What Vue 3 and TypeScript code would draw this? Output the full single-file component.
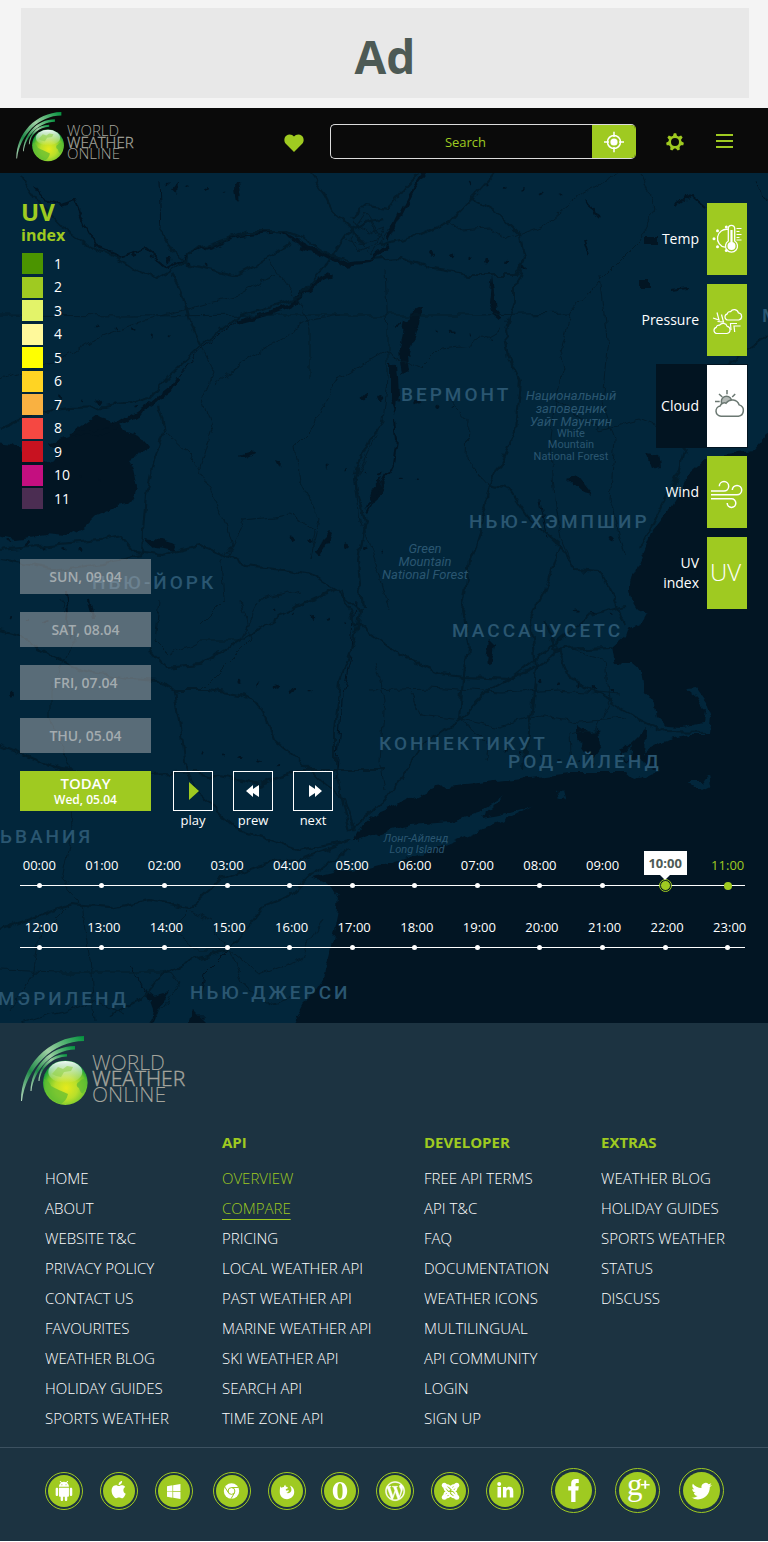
<script setup lang="ts">
import { ref } from 'vue'

interface LegendEntry { value: number; color: string }
interface MapLabel { text: string; x: number; y: number; kind: 'state' | 'park' | 'small' | 'island' }
interface Road { d: string; w: number }
interface Column { title: string; links: string[] }

const legend: LegendEntry[] = [
  { value: 1, color: '#4b9400' },
  { value: 2, color: '#9fca21' },
  { value: 3, color: '#e3f369' },
  { value: 4, color: '#fff99b' },
  { value: 5, color: '#ffff00' },
  { value: 6, color: '#ffd423' },
  { value: 7, color: '#f9b141' },
  { value: 8, color: '#f54842' },
  { value: 9, color: '#c81220' },
  { value: 10, color: '#c40f80' },
  { value: 11, color: '#4b2d52' },
]

const layers = ['Temp', 'Pressure', 'Cloud', 'Wind', 'UV index']
const activeLayer = ref('Cloud')

const days = ['SUN, 09.04', 'SAT, 08.04', 'FRI, 07.04', 'THU, 05.04']

const hour = (n: number): string => `${String(n).padStart(2, '0')}:00`
const timelines = [
  Array.from({ length: 12 }, (_, i) => hour(i)),
  Array.from({ length: 12 }, (_, i) => hour(i + 12)),
]
const selectedHour = ref('10:00')
const nextHour = '11:00'

const columns: Column[] = [
  { title: '', links: ['HOME', 'ABOUT', 'WEBSITE T&C', 'PRIVACY POLICY', 'CONTACT US', 'FAVOURITES', 'WEATHER BLOG', 'HOLIDAY GUIDES', 'SPORTS WEATHER'] },
  { title: 'API', links: ['OVERVIEW', 'COMPARE', 'PRICING', 'LOCAL WEATHER API', 'PAST WEATHER API', 'MARINE WEATHER API', 'SKI WEATHER API', 'SEARCH API', 'TIME ZONE API'] },
  { title: 'DEVELOPER', links: ['FREE API TERMS', 'API T&C', 'FAQ', 'DOCUMENTATION', 'WEATHER ICONS', 'MULTILINGUAL', 'API COMMUNITY', 'LOGIN', 'SIGN UP'] },
  { title: 'EXTRAS', links: ['WEATHER BLOG', 'HOLIDAY GUIDES', 'SPORTS WEATHER', 'STATUS', 'DISCUSS'] },
]

const labels: MapLabel[] = [
  { text: 'ВЕРМОНТ', x: 401, y: 401, kind: 'state' },
  { text: 'НЬЮ-ХЭМПШИР', x: 469, y: 528, kind: 'state' },
  { text: 'МАССАЧУСЕТС', x: 452, y: 637, kind: 'state' },
  { text: 'КОННЕКТИКУТ', x: 379, y: 750, kind: 'state' },
  { text: 'РОД-АЙЛЕНД', x: 508, y: 768, kind: 'state' },
  { text: 'НЬЮ-ЙОРК', x: 92, y: 589, kind: 'state' },
  { text: 'ЬВАНИЯ', x: 0, y: 843, kind: 'state' },
  { text: 'МЭРИЛЕНД', x: -2, y: 1005, kind: 'state' },
  { text: 'НЬЮ-ДЖЕРСИ', x: 190, y: 999, kind: 'state' },
  { text: 'МЭН', x: 762, y: 322, kind: 'state' },
  { text: 'Национальный', x: 571, y: 400, kind: 'park' },
  { text: 'заповедник', x: 571, y: 413, kind: 'park' },
  { text: 'Уайт Маунтин', x: 571, y: 426, kind: 'park' },
  { text: 'White', x: 571, y: 437, kind: 'small' },
  { text: 'Mountain', x: 571, y: 448, kind: 'small' },
  { text: 'National Forest', x: 571, y: 460, kind: 'small' },
  { text: 'Green', x: 425, y: 553, kind: 'park' },
  { text: 'Mountain', x: 425, y: 566, kind: 'park' },
  { text: 'National Forest', x: 425, y: 579, kind: 'park' },
  { text: 'Лонг-Айленд', x: 416, y: 842, kind: 'island' },
  { text: 'Long Island', x: 417, y: 853, kind: 'island' },
]

const roads: Road[] = [
  { w: 2, d: '0,429 40,412 70,408 105,407 130,403 150,398 170,375 200,347 240,315 270,307 300,297 325,267 345,235 365,222 384,218' },
  { w: 2, d: '20,177 35,200 60,225 90,247 120,258 140,272 155,279 175,267 200,248 250,232 285,232 305,240 330,255 350,262' },
  { w: 2, d: '160,230 172,252 190,265 235,275 260,262 290,242' },
  { w: 2, d: '172,272 184,300 190,325 200,345' },
  { w: 1, d: '200,345 214,372 203,400 212,430 200,470' },
  { w: 2, d: '158,405 164,430 155,455 146,495 143,530 142,555 120,560 60,570 0,560' },
  { w: 1, d: '164,430 190,455 215,500 225,520 232,545 228,555' },
  { w: 2, d: '310,173 325,195 335,215 350,228 365,245' },
  { w: 2, d: '0,550 50,545 100,540 120,535 135,552 160,555 200,545 225,555 245,566 285,570 310,575 335,590' },
  { w: 2, d: '384,420 370,440 358,465 355,480 365,520 358,560 362,610' },
  { w: 1, d: '384,352 420,368 440,348 470,345 500,328' },
  { w: 1, d: '340,315 310,320 262,350 230,372 214,385' },
  { w: 1, d: '0,380 60,360 90,340 130,325 190,308 240,295 275,275' },
  { w: 1, d: '384,352 340,378 310,430 295,445 300,480 320,520 310,560' },
  { w: 1, d: '270,260 290,290 300,305 310,330 310,380' },
  { w: 1, d: '232,545 245,520 290,515 315,530 310,560' },
  { w: 1, d: '232,545 222,560 225,600 200,625' },
  { w: 1, d: '0,315 130,316 280,315 480,315 570,313 600,280 640,240 655,210 640,173' },
  { w: 1, d: '570,313 560,350 565,370 555,400 550,440 555,500 562,540 575,570' },
  { w: 1, d: '600,275 608,340 602,400 615,440 610,500 625,555' },
  { w: 2, d: '350,220 368,205 390,208 405,188 420,173' },
  { w: 1, d: '345,240 360,245 380,238 370,220 350,230 372,255 390,230' },
  { w: 1, d: '352,222 368,232 384,226 376,246 358,252 348,238 366,212 384,240' },
  { w: 2, d: '380,245 420,235 450,222 480,190 495,173' },
  { w: 2, d: '470,198 500,215 520,235 525,258 515,275 470,275 430,268 400,258 370,260' },
  { w: 1, d: '450,222 460,230 490,228 506,240 545,225 580,195 620,173' },
  { w: 2, d: '525,258 515,285 515,300 505,330 510,360 520,380 515,430 490,485 480,530 470,560 462,610 468,650 463,680' },
  { w: 2, d: '490,485 510,490 530,520 560,545 575,570 600,572 615,600 625,625' },
  { w: 1, d: '385,270 388,330 388,380 383,420 355,480 360,520 375,560 390,610' },
  { w: 1, d: '450,400 468,420 467,460 490,485' },
  { w: 2, d: '768,335 740,355 710,380 690,430 680,470 660,510 640,550' },
  { w: 1, d: '555,400 600,430 640,420 690,440' },
  { w: 2, d: '560,545 545,590 530,620 535,668 530,720 525,770' },
  { w: 2, d: '340,590 355,622 370,633 400,655 440,673 463,676 510,678 535,668 560,650 612,648' },
  { w: 2, d: '463,676 460,720 420,745 410,765 385,800 350,830' },
  { w: 1, d: '410,690 420,715 460,720 490,745 487,760' },
  { w: 2, d: '545,620 570,680 610,700 640,720 665,732 705,733' },
  { w: 1, d: '460,720 500,728 540,715 580,722 625,718' },
  { w: 2, d: '460,720 490,690 515,675 560,640 590,615 625,605' },
  { w: 1, d: '570,650 605,660 610,700 595,730 570,735 572,765' },
  { w: 1, d: '370,690 430,688 500,693 560,690 620,695' },
  { w: 1, d: '375,660 385,700 380,760 385,790' },
  { w: 2, d: '0,630 20,635 50,655 80,670 130,678 160,680 175,690 180,720 185,760 195,790 240,830 300,850 350,840' },
  { w: 2, d: '175,690 210,690 240,695 265,710 275,740 300,760 320,780 345,800 355,830' },
  { w: 2, d: '150,650 165,668 200,665 240,640 290,610 335,590 360,612 355,640 340,680 335,730 335,770 350,830' },
  { w: 1, d: '240,600 250,640 230,660 200,690' },
  { w: 1, d: '160,600 155,640 170,655 200,640 240,640 260,600 300,590' },
  { w: 2, d: '0,745 60,770 120,775 200,772 260,785 300,770 384,770' },
  { w: 1, d: '60,600 75,640 50,690 50,720 70,770 72,830' },
  { w: 2, d: '0,930 70,905 110,908 150,900 190,908 220,880 270,862 300,860 350,840' },
  { w: 2, d: '230,950 250,925 265,905 290,895 310,875 350,850' },
  { w: 1, d: '72,830 62,880 80,900 90,960 95,1020' },
  { w: 2, d: '230,950 190,960 160,975 140,1000 110,1015' },
  { w: 1, d: '230,950 210,920 190,910 170,930 200,950 230,950 260,975 300,960 320,920' },
  { w: 1, d: '230,950 245,985 270,1005 300,995' },
  { w: 1, d: '0,970 60,972 170,972 180,985 150,1023' },
  { w: 1, d: '20,1023 70,1010 95,1000 125,1015' },
  { w: 1, d: '70,905 40,935 35,970 10,1010' },
]

const specks = Array.from({ length: 100 }, (_, i) => {
  const a = (i * 7919 + 131) % 997
  const b = (i * 6007 + 577) % 983
  return { x: (a / 997) * 620, y: 176 + (b / 983) * 640, rx: 1 + (a % 3), ry: 1 + (b % 2), r: (a * 7) % 180 }
})
</script>

<template>
  <svg class="defs" width="0" height="0" aria-hidden="true">
    <defs>
      <linearGradient id="arcFill" x1="0" y1="1" x2="1" y2="0">
        <stop offset="0" stop-color="#b9dcc0" />
        <stop offset=".3" stop-color="#1f8a48" />
        <stop offset=".6" stop-color="#9fd0a4" />
        <stop offset="1" stop-color="#00913c" />
      </linearGradient>
      <radialGradient id="globeFill" cx=".52" cy=".62" r=".56">
        <stop offset="0" stop-color="#e6ea1c" />
        <stop offset=".45" stop-color="#b9df2b" />
        <stop offset=".8" stop-color="#6cc52f" />
        <stop offset="1" stop-color="#189e3c" />
      </radialGradient>
      <linearGradient id="globeShine" x1="0" y1="0" x2="0" y2="1">
        <stop offset="0" stop-color="#fff" stop-opacity=".95" />
        <stop offset="1" stop-color="#fff" stop-opacity="0" />
      </linearGradient>
      <symbol id="logo" viewBox="0 0 167 70">
        <path fill="url(#arcFill)" d="M0 65C0 30 27 1 63 0v5C32 5 5 32 1 65z" />
        <path fill="url(#arcFill)" d="M9.500 55C10 32 28 10 54 10v3.500C31 14 13 34 10.500 55z" />
        <path fill="url(#arcFill)" d="M17.500 45C18 30 30 18 46 18v2.500C32 21 20 31 18.500 45z" />
        <circle cx="44.300" cy="46.700" r="22.300" fill="url(#globeFill)" />
        <path fill="#5dbb33" opacity=".7" d="M23 43c4 1 6 4 7 7 4 2 10 5 17 8-1 5-4 8-7 10-9-2-17-10-17-25zM66 43c-3-1-6 0-8 3-3 1-3 5 0 6 1 3 2 6 4 5 3-4 5-8 4-14z" />
        <ellipse cx="44.300" cy="36" rx="17" ry="11" fill="url(#globeShine)" />
        <path fill="#8fd04a" opacity=".6" d="M31 38l6-7 5 2 4-3 6 1-2 4-7 1-3 5-5-1z" />
        <g font-family="'Open Sans', sans-serif" font-weight="300" font-size="21" fill="#a3a49c">
          <text x="71" y="34">WORLD</text>
          <text x="71" y="50" stroke="#a3a49c" stroke-width=".4">WEATHER</text>
          <text x="71" y="66">ONLINE</text>
        </g>
      </symbol>
    </defs>
  </svg>

  <div class="page">
    <aside class="ad"><div class="ad-box">Ad</div></aside>

    <header class="top">
      <a class="brand" href="#" aria-label="World Weather Online"><svg width="120" height="50"><use href="#logo" /></svg></a>
      <button class="icon-btn heart" aria-label="Favourites">
        <svg width="20" height="20" viewBox="0 0 20 20"><path fill="#9fca21" d="M10 19L1.800 10.800C-.5 8 .2 4.600 2.200 2.800 4.500.8 8 1 10 3.500 12 1 15.500.8 17.800 2.800c2 1.800 2.700 5.200.4 8z" /></svg>
      </button>
      <form class="search" role="search" @submit.prevent>
        <input type="text" placeholder="Search" aria-label="Search" />
        <button aria-label="Use my location">
          <svg width="22" height="22" viewBox="0 0 22 22" fill="none" stroke="#fff">
            <circle cx="11" cy="11" r="6.500" stroke-width="1.500" />
            <circle cx="11" cy="11" r="3.600" fill="#fff" stroke="none" />
            <path stroke-width="1.500" d="M11 .8V6M11 16v5.200M1 11h5M16 11h5" />
          </svg>
        </button>
      </form>
      <button class="icon-btn gear" aria-label="Settings">
        <svg width="18" height="18" viewBox="-9 -9 18 18">
          <circle r="5.300" fill="none" stroke="#9fca21" stroke-width="2.600" />
          <g fill="#9fca21">
            <path v-for="n in 7" :key="n" :transform="`rotate(${(n - 1) * 360 / 7})`" d="M-2.100-5.800L-1.200-8.800H1.200L2.100-5.800z" />
          </g>
        </svg>
      </button>
      <button class="icon-btn menu" aria-label="Menu"><span></span><span></span><span></span></button>
    </header>

    <main class="map-area">
      <svg class="map" viewBox="0 173 768 850" preserveAspectRatio="xMinYMin slice" aria-hidden="true">
        <defs>
          <filter id="coast" x="0" y="0" width="1" height="1" color-interpolation-filters="sRGB">
            <feTurbulence type="fractalNoise" baseFrequency=".07" numOctaves="3" seed="4" />
            <feDisplacementMap in="SourceGraphic" scale="10" xChannelSelector="R" yChannelSelector="G" />
          </filter>
        </defs>
        <rect x="0" y="173" width="768" height="850" fill="#02263b" />
        <g filter="url(#coast)">
          <rect x="-20" y="153" width="820" height="900" fill="#02263b" />
          <g fill="#021523">
            <path d="M-20 440L12 444 22 452 45 463 60 455 50 445 62 440 75 436 80 428 97 416 115 422 122 430 140 437 147 446 138 458 128 462 133 470 137 488 133 500 128 505 115 507 97 515 85 527 67 537 45 535 15 539-20 532z" />
            <path d="M800 415L768 433 753 450 720 455 703 463 687 477 677 497 667 513 653 530 648 543 642 557 633 577 630 590 632 600 637 608 648 613 643 622 628 628 625 637 612 648 615 662 630 663 642 673 645 690 655 703 657 718 667 727 683 728 703 723 705 710 697 697 685 687 695 686 705 700 711 717 709 735 690 735 663 742 648 750 640 760 660 772 633 779 625 772 570 772 530 777 487 782 437 787 403 803 370 817 363 823 355 837 350 855 337 872 312 878 333 887 339 897 337 917 330 950 323 977 307 1000 280 1050 800 1050z" />
            <path d="M646 727L633 740 620 752 627 765 645 758zM578 725l12 8 8-5 2 18-8 12-6-5-8-12zM399 350l5-30 7 2-5 34 2 14-6 6zM413 310l8-4-2 16-10 36-4-4zM391 360l6 4 2 30-3 20-5-14zM145 538l16 2 17 5-2 6-20-3zM492 275l4 34 8 10-3 2-7-6-5-14zM568 480l10-4 14 18-12-3zM646 452l12 2 2 12-8 2zM645 235h13v10h-13zM640 278h12v11h-12zM150 1030l3-20-8-22 10 8 14-4-12 22zM190 1030l4-20 14 14 6 10zM632 743l-3 20-8-6zM490 640l6 6-4 18-5-4z" />
            <path d="M317 552l5-14 8-8 3 2-6 14-6 10zM366 510l8-22 10-12-6 20zM240 455l10-3 4 2-10 5zM276 460l5 2-1 6zM172 190l6-8-1 14zM235 188l4-6 2 12-4 6z" />
          </g>
          <g fill="#02263b">
            <path d="M325 872L345 845 370 836 410 825 450 822 480 812 505 795 492 808 480 818 500 815 532 806 500 822 470 835 440 847 400 860 370 868zM688 783l14 0 6-8 2 10-8 4-10 0zM556 792l5-2 2 8-5 2z" />
          </g>
          <g fill="none" stroke="#021523" stroke-linejoin="round">
            <path stroke-width="4" d="M70 436L110 430 150 405 172 388 178 378" />
            <path stroke-width="4" d="M235 322L270 313 290 305 320 280 330 275M300 247L320 252 345 265 370 262 390 245" />
            <path stroke-width="3" d="M388 240L400 215 410 195 425 173" />
            <path stroke-width="2" d="M395 420L397 440 393 465 380 490 367 514" />
            <path stroke-width="2" d="M35 187L45 200 60 205 75 200 85 225 95 245 120 256 145 248 168 267 200 250 240 236 280 232 310 248" />
            <path stroke-width="1" d="M178 378L200 350 235 322M355 600L352 650 342 700 335 780M230 950L205 975 200 1000M130 965L150 1000M540 500L548 540M160 180L162 230M768 200L755 180" />
            <path stroke-width="2" d="M585 200L595 208 600 220M675 205L690 195 705 208M670 290L690 288M585 240L590 255M88 600L92 620M66 590L70 640" />
            <ellipse v-for="(s, i) in specks" :key="i" :cx="s.x" :cy="s.y" :rx="s.rx" :ry="s.ry" :transform="`rotate(${s.r} ${s.x} ${s.y})`" fill="#021523" stroke="none" />
          </g>
          <g fill="none" stroke="#021c2b" stroke-linejoin="round">
            <polyline v-for="(r, i) in roads" :key="i" :points="r.d" :stroke-width="r.w" />
          </g>
        </g>
        <text v-for="(l, i) in labels" :key="i" :x="l.x" :y="l.y" :class="l.kind">{{ l.text }}</text>
      </svg>

      <div class="overlay">
        <div class="upper">
          <div class="left">
            <section class="legend" aria-label="UV index">
              <h2>UV</h2>
              <h3>index</h3>
              <ul>
                <li v-for="e in legend" :key="e.value"><i :style="{ background: e.color }"></i>{{ e.value }}</li>
              </ul>
            </section>

            <div class="days">
              <button v-for="d in days" :key="d" class="day">{{ d }}</button>
              <div class="controls">
                <button class="today"><b>TODAY</b><span>Wed, 05.04</span></button>
                <button class="player">
                  <span class="frame"><svg class="play" width="10" height="18" viewBox="0 0 10 18"><path fill="#9fca21" d="M0 0l10 9-10 9z" /></svg></span>
                  play
                </button>
                <button class="player">
                  <span class="frame"><svg width="14" height="12" viewBox="0 0 14 12"><path fill="#fff" d="M7 0v4l6-4v12L7 8v4L0 6z" /></svg></span>
                  prew
                </button>
                <button class="player">
                  <span class="frame"><svg class="forward" width="14" height="12" viewBox="0 0 14 12"><path fill="#fff" d="M7 0v4L1 0v12l6-4v4l7-6z" /></svg></span>
                  next
                </button>
              </div>
            </div>
          </div>

          <nav class="layers" aria-label="Map layers">
            <button v-for="l in layers" :key="l" :class="['layer', { active: l === activeLayer }]" @click="activeLayer = l">
              <span class="layer-name">{{ l }}</span>
              <span class="tile">
                <svg v-if="l === 'Temp'" width="40" height="40" viewBox="0 0 40 40" fill="none" stroke="#fff">
                  <path stroke-width="1.300" d="M21 10.400a9 9 0 1 0-3 17.800" />
                  <g fill="#fff" stroke="none"><circle cx="7" cy="19.700" r="1.500" /><circle cx="10.500" cy="11.700" r="1.500" /><circle cx="10.500" cy="27.700" r="1.500" /><circle cx="19.300" cy="8" r="1.500" /><circle cx="19.300" cy="31.500" r="1.500" /></g>
                  <path stroke-width="1.300" d="M21.300 22V9.500a3.200 3.200 0 0 1 6.400 0V22a6 6 0 1 1-6.400 0z" />
                  <circle cx="24.500" cy="27" r="4" fill="#fff" stroke="none" />
                  <path stroke-width="2.200" d="M24.500 11v14" />
                  <path d="M29.500 9.500h5M29.500 12.500h3M29.500 15.500h5M29.500 18.500h3M29.500 21h5" />
                </svg>
                <svg v-else-if="l === 'Pressure'" width="40" height="40" viewBox="0 0 40 40" fill="none" stroke="#fff" stroke-width="1.200">
                  <path d="M20.500 20a3.200 3.200 0 0 1-.2-6.200 2.800 2.800 0 0 1 3.300-2.200 4.300 4.300 0 0 1 7.800 1.300 3.600 3.600 0 0 1 .4 7.100z" />
                  <path d="M9.500 33.500a3.200 3.200 0 0 1-.2-6.200 2.800 2.800 0 0 1 3.300-2.200 4.300 4.300 0 0 1 7.600 1.300 3.600 3.600 0 0 1-.2 7.100z" />
                  <path d="M6 18l6 2-2-7.500M10.500 21.500l6 .5-2-7.500M30 23.500h-6.500L24 30M33.500 26h-6.500l.7 6" />
                </svg>
                <svg v-else-if="l === 'Cloud'" width="40" height="40" viewBox="0 0 40 40" fill="none" stroke="#6b7872" stroke-width="1.500">
                  <circle cx="19.500" cy="15.500" r="5.200" fill="#b4bab7" />
                  <path fill="#fff" d="M14 30.200a5.200 5.200 0 0 1-.8-10.300 4.300 4.300 0 0 1 5.900-2.700 7.400 7.400 0 0 1 13.100 1.700 5.800 5.800 0 0 1-.8 11.300z" />
                  <path d="M20 4v4.300M12 8l3.300 3M28.200 8l-3 3M8 15.400h4.700" />
                </svg>
                <svg v-else-if="l === 'Wind'" width="40" height="40" viewBox="0 0 40 40" fill="none" stroke="#fff" stroke-width="1.500">
                  <path d="M4 19h13a4.700 4.700 0 1 0-4.700-4.700M4 22.800h26a4.700 4.700 0 1 0-4.700-4.700M4 26.800h20.500a4.300 4.300 0 1 1-4.300 4.300" />
                </svg>
                <span v-else class="uv">UV</span>
              </span>
            </button>
          </nav>
        </div>

        <div v-for="(row, r) in timelines" :key="r" :class="['timeline', { late: r === 1 }]">
          <button
            v-for="h in row"
            :key="h"
            :class="['tick', { selected: h === selectedHour, upcoming: h === nextHour }]"
            @click="selectedHour = h"
          >
            <span class="time">{{ h }}</span>
            <span class="stop"><i></i></span>
          </button>
        </div>
      </div>
    </main>

    <footer class="footer">
      <svg class="footer-logo" width="167" height="70"><use href="#logo" /></svg>
      <nav class="columns" aria-label="Footer">
        <section v-for="(c, i) in columns" :key="i">
          <h4>{{ c.title }}</h4>
          <a v-for="l in c.links" :key="l" href="#" :class="{ lit: l === 'OVERVIEW', current: l === 'COMPARE' }">{{ l }}</a>
        </section>
      </nav>
      <div class="social">
        <div class="group">
          <a href="#" aria-label="Android"><svg viewBox="0 0 32 32"><path transform="translate(6 6) scale(.83)" d="M6 18c0 .55.45 1 1 1h1v3.500c0 .83.67 1.500 1.500 1.500s1.500-.67 1.500-1.500V19h2v3.500c0 .83.67 1.500 1.500 1.500s1.500-.67 1.500-1.500V19h1c.55 0 1-.45 1-1V8H6v10zM3.500 8C2.670 8 2 8.670 2 9.500v7c0 .83.67 1.500 1.500 1.500S5 17.330 5 16.500v-7C5 8.670 4.330 8 3.500 8zm17 0c-.83 0-1.500.67-1.500 1.500v7c0 .83.67 1.500 1.500 1.500s1.500-.67 1.500-1.500v-7c0-.83-.67-1.500-1.500-1.500zm-4.970-5.840l1.300-1.300c.2-.2.2-.51 0-.71-.2-.2-.51-.2-.71 0l-1.480 1.480C13.850 1.230 12.950 1 12 1c-.96 0-1.860.23-2.660.63L7.850.15c-.2-.2-.51-.2-.71 0-.2.2-.2.51 0 .71l1.310 1.310C6.970 3.260 6 5.010 6 7h12c0-1.990-.97-3.750-2.470-4.840zM10 5H9V4h1v1zm5 0h-1V4h1v1z" /></svg></a>
          <a href="#" aria-label="Apple"><svg viewBox="0 0 32 32"><path transform="translate(7 6) scale(.72)" d="M12.152 6.896c-.948 0-2.415-1.078-3.960-1.040-2.040.027-3.910 1.183-4.961 3.014-2.117 3.675-.546 9.103 1.519 12.090 1.013 1.454 2.208 3.090 3.792 3.039 1.520-.065 2.090-.987 3.935-.987 1.831 0 2.350.987 3.960.948 1.637-.026 2.676-1.480 3.676-2.948 1.156-1.688 1.636-3.325 1.662-3.415-.039-.013-3.182-1.221-3.220-4.857-.026-3.040 2.480-4.494 2.597-4.559-1.429-2.090-3.623-2.324-4.390-2.376-2-.156-3.675 1.090-4.610 1.090zM15.530 3.830c.843-1.012 1.400-2.427 1.245-3.830-1.207.052-2.662.805-3.532 1.818-.78.896-1.454 2.338-1.273 3.714 1.338.104 2.715-.688 3.559-1.701" /></svg></a>
          <a href="#" aria-label="Windows"><svg viewBox="0 0 32 32"><path transform="translate(9 9) scale(.56 .62)" d="M0 3.449L9.750 2.100v9.451H0m10.949-9.602L24 0v11.400H10.949M0 12.600h9.750v9.451L0 20.699M10.949 12.600H24V24l-12.900-1.801" /></svg></a>
        </div>
        <div class="group">
          <a href="#" aria-label="Chrome"><svg viewBox="0 0 32 32"><circle cx="15.500" cy="16" r="7.700" /><circle cx="15.500" cy="16" r="3.400" fill="#fff" stroke="#9fca21" /><path fill="none" stroke="#9fca21" d="M15.500 12.500h7.200M12.500 17.800L8.800 12M18.500 17.800l-3.500 6" /></svg></a>
          <a href="#" aria-label="Firefox"><svg viewBox="0 0 32 32"><path d="M9.500 11.200l.8 1.600c1-.6 2-.8 2.800-.7-.3-.8.2-1.700 1.300-2.400-.1 1.200.4 2 1.800 2.300l1 1-2.300 1.300c-.4 1 .2 1.500 1.100 1.300l2-.4c-.3 1.800-1.600 2.600-3 2.400 2 1.300 4.600.4 5.300-1.800.5-2-.2-3.600-1.500-5.200 2.700 1 4.700 3.400 4.400 7-.3 3.900-3.400 6.600-7.200 6.600-4 0-7.200-3-7.200-7 0-2.300.1-4.300.7-6z" /></svg></a>
        </div>
        <div class="group">
          <a href="#" aria-label="Opera"><svg viewBox="0 0 32 32"><path fill-rule="evenodd" d="M16 7c4.500 0 7.200 4 7.200 9s-2.700 9-7.200 9-7.200-4-7.200-9 2.700-9 7.200-9zm0 1.300c-1.900 0-2.600 3-2.600 7.700s.7 7.700 2.600 7.700 2.600-3 2.600-7.700-.7-7.700-2.600-7.700z" /></svg></a>
          <a href="#" aria-label="WordPress"><svg viewBox="0 0 32 32"><path transform="translate(6.500 6.500) scale(.8)" d="M21.469 6.825c.84 1.537 1.318 3.300 1.318 5.175 0 3.979-2.156 7.456-5.363 9.325l3.295-9.527c.615-1.540.82-2.771.82-3.864 0-.405-.026-.78-.07-1.110m-7.981.105c.647-.03 1.232-.105 1.232-.105.582-.075.514-.93-.067-.899 0 0-1.755.135-2.880.135-1.064 0-2.850-.15-2.850-.15-.585-.03-.661.855-.075.885 0 0 .54.061 1.125.09l1.680 4.605-2.370 7.080L5.354 6.900c.649-.03 1.234-.1 1.234-.1.585-.075.516-.93-.065-.896 0 0-1.746.138-2.874.138-.2 0-.438-.008-.69-.015C4.911 3.150 8.235 1.215 12 1.215c2.809 0 5.365 1.072 7.286 2.833-.046-.003-.091-.009-.141-.009-1.060 0-1.812.923-1.812 1.914 0 .89.513 1.643 1.060 2.531.411.72.89 1.643.89 2.977 0 .915-.354 1.994-.821 3.479l-1.075 3.585-3.900-11.610.001.014zM12 22.784c-1.059 0-2.081-.153-3.048-.437l3.237-9.406 3.315 9.087c.024.053.05.101.078.149-1.120.393-2.325.609-3.582.609M1.211 12c0-1.564.336-3.050.935-4.390L7.290 21.709C3.694 19.960 1.212 16.271 1.211 12M12 0C5.385 0 0 5.385 0 12s5.385 12 12 12 12-5.385 12-12S18.615 0 12 0" stroke="#fff" stroke-width=".6" /></svg></a>
          <a href="#" aria-label="Joomla">
            <svg viewBox="0 0 32 32">
              <circle cx="10.300" cy="10.300" r="2.500" /><circle cx="22.700" cy="10.300" r="2.500" /><circle cx="10.300" cy="22.300" r="2.500" /><circle cx="22.700" cy="22.300" r="2.500" />
              <path fill="none" stroke="#fff" stroke-width="2" d="M10.300 10.300L22.700 22.300M22.700 10.300L10.300 22.300M10.300 10.500c-.5 3 .5 4.300 2 5.800l4.200 4.200c1.700 1.600 3 2.300 6 1.800M22.700 22c.5-3-.5-4.300-2-5.800L16.500 12c-1.700-1.600-3-2.300-6-1.800M22.700 10.500c.5 3-.5 4.300-2 5.800M12.300 16.300c-1.500 1.500-2.500 3-2 5.800M16.500 12c1.700-1.600 3-2.300 6-1.800M16.500 20.500c-1.700 1.600-3 2.300-6 1.800" />
              <path fill="#9fca21" d="M16.500 14.600l1.700 1.700-1.700 1.700-1.700-1.700z" />
            </svg>
          </a>
          <a href="#" aria-label="LinkedIn"><svg viewBox="0 0 32 32"><circle cx="10.200" cy="9" r="2" /><path d="M8.500 12h3.500v10.500H8.500zM14 12h3.200v1.400c.7-1.100 1.800-1.700 3.200-1.700 2.700 0 3.900 1.600 3.900 4.600v6.200h-3.500v-5.600c0-1.600-.4-2.400-1.600-2.400s-1.800.9-1.800 2.500v5.500H14z" /></svg></a>
        </div>
        <div class="group large">
          <a href="#" aria-label="Facebook"><svg viewBox="0 0 37 37"><path d="M16.200 30V18.500h-3v-4.300h3v-2.400c0-4 2.200-4.800 4.800-4.800 1.300 0 2.300.1 2.800.3v3.700h-1.700c-1.300 0-1.600.6-1.600 1.700v1.500h3.300l-.5 4.300h-2.800V30z" /></svg></a>
          <a href="#" aria-label="Google Plus"><svg viewBox="0 0 37 37"><text x="8" y="23" font-family="'Liberation Serif', serif" font-size="31">g</text><path d="M25.300 8.500h1.900v3.400h3.400v1.500h-3.400v3.400h-1.900v-3.400h-3.400v-1.500h3.400z" /></svg></a>
          <a href="#" aria-label="Twitter"><svg viewBox="0 0 37 37"><path transform="translate(8.500 9) scale(.85)" d="M23.953 4.570a10 10 0 01-2.825.775 4.958 4.958 0 002.163-2.723c-.951.555-2.005.959-3.127 1.184a4.920 4.920 0 00-8.384 4.482C7.690 8.095 4.067 6.130 1.640 3.162a4.822 4.822 0 00-.666 2.475c0 1.710.87 3.213 2.188 4.096a4.904 4.904 0 01-2.228-.616v.06a4.923 4.923 0 003.946 4.827 4.996 4.996 0 01-2.212.085 4.936 4.936 0 004.604 3.417 9.867 9.867 0 01-6.102 2.105c-.39 0-.779-.023-1.170-.067a13.995 13.995 0 007.557 2.209c9.053 0 13.998-7.496 13.998-13.985 0-.21 0-.42-.015-.63A9.935 9.935 0 0024 4.590z" /></svg></a>
        </div>
      </div>
    </footer>
  </div>
</template>

<style>
body {
  margin: 0;
}
</style>

<style scoped>
.defs {
  position: absolute;
}
.page {
  font-family: 'Open Sans', 'Noto Sans', sans-serif;
  color: #fff;
}
button {
  font: inherit;
  color: inherit;
  background: none;
  border: 0;
  padding: 0;
  cursor: pointer;
}
svg {
  display: block;
}
h2,
h3,
h4,
ul {
  margin: 0;
  padding: 0;
  list-style: none;
}
a {
  color: inherit;
  text-decoration: none;
}

.ad {
  background: #f4f4f4;
  padding: 8px 19px 10px 21px;
}
.ad-box {
  height: 90px;
  line-height: 96px;
  background: #e8e8e8;
  color: #4d5a55;
  font-size: 46px;
  font-weight: 700;
  text-align: center;
}

.top {
  display: flex;
  align-items: center;
  height: 65px;
  padding: 0 35px 0 16px;
  background: #0a0a0a;
}
.brand {
  margin: 0 auto 7px 0;
}
.heart {
  margin: 4px 26px 0 0;
}
.search {
  display: flex;
  flex: 0 1 306px;
  height: 35px;
  margin-top: 2px;
  box-sizing: border-box;
  border: 1px solid #dcdcdc;
  border-right-color: #9fca21;
  border-radius: 5px;
  overflow: hidden;
}
.search input {
  flex: 1;
  min-width: 0;
  padding: 0 0 0 8px;
  border: 0;
  outline: 0;
  background: none;
  color: #9fca21;
  font: 13px 'Open Sans', sans-serif;
  text-align: center;
}
.search input::placeholder {
  color: #9fca21;
  opacity: 1;
}
.search button {
  display: grid;
  place-items: center;
  width: 43px;
  height: 35px;
  margin: -1px 0;
  background: #9fca21;
}
.gear {
  margin: 2px 32px 0 30px;
}
.menu {
  display: grid;
  gap: 4px;
  width: 17px;
}
.menu span {
  height: 2px;
  background: #9fca21;
}

.map-area {
  position: relative;
  background: #02263b;
  overflow: hidden;
}
.map {
  position: absolute;
  inset: 0;
  width: 100%;
  height: 100%;
}
.map text {
  font-family: Roboto, 'Noto Sans', sans-serif;
  fill: #2a5671;
}
.map .state {
  font-size: 19px;
  font-weight: 500;
  letter-spacing: 3px;
}
.map .park {
  font-size: 13px;
  font-style: italic;
  text-anchor: middle;
}
.map .small {
  font-size: 11px;
  text-anchor: middle;
}
.map .island {
  font-size: 11px;
  font-style: italic;
  text-anchor: middle;
}
.overlay {
  position: relative;
  padding: 30px 0 67px;
}
.upper {
  display: flex;
  justify-content: space-between;
  align-items: flex-start;
  padding: 0 21px 0 20px;
}
.legend {
  margin-top: -3px;
  padding-left: 1px;
  color: #9fca21;
}
.legend h2 {
  font-size: 24px;
  line-height: 24px;
}
.legend h3 {
  margin-bottom: 7px;
  font-size: 16px;
  line-height: 22px;
}
.legend ul {
  display: flex;
  flex-direction: column;
  justify-content: space-between;
  height: 256px;
  padding-left: 1px;
}
.legend li {
  display: flex;
  align-items: center;
  gap: 11px;
  height: 21px;
  color: #fff;
  font-size: 14px;
  font-weight: 500;
  line-height: 20px;
}
.legend i {
  width: 21px;
  height: 21px;
}

.days {
  display: flex;
  flex-direction: column;
  align-items: flex-start;
  gap: 18px;
  margin-top: 50px;
}
.day {
  width: 131px;
  height: 35px;
  background: rgba(164, 168, 172, 0.54);
  color: #a3abaf;
  font-size: 14px;
  font-weight: 600;
}
.controls {
  display: flex;
  align-items: flex-start;
  gap: 20px;
}
.today {
  display: flex;
  flex-direction: column;
  justify-content: center;
  width: 131px;
  height: 40px;
  margin-right: 2px;
  background: #9fca21;
  text-align: center;
}
.today b {
  font-size: 15px;
  font-weight: 600;
  line-height: 18px;
}
.today span {
  font-size: 12px;
  font-weight: 600;
  line-height: 16px;
}
.player {
  width: 40px;
  font-size: 13px;
  font-weight: 500;
  line-height: 18px;
}
.frame {
  display: grid;
  place-items: center;
  height: 38px;
  border: 1px solid #fff;
}
.play {
  margin-left: 2px;
}
.forward {
  margin-left: 4px;
}

.layers {
  display: flex;
  flex-direction: column;
  align-items: flex-end;
  gap: 9px;
}
.layer {
  display: flex;
  align-items: center;
  gap: 8px;
  height: 72px;
  font-size: 14px;
  font-weight: 500;
  line-height: 20px;
  text-align: right;
}
.layer:last-child .layer-name {
  width: 40px;
}
.layer.active {
  height: 82px;
  padding-left: 4px;
  background: #021421;
  box-shadow: 0 0 0 1px #021421;
}
.tile {
  display: grid;
  place-items: center;
  width: 40px;
  height: 100%;
  background: #9fca21;
}
.active .tile {
  background: #fff;
}
.uv {
  padding: 0 3px 3px 0;
  font-size: 24px;
  font-weight: 300;
}

.timeline {
  position: relative;
  display: grid;
  grid-template-columns: repeat(12, 1fr);
  margin: 22px 9px 0 8px;
}
.timeline.late {
  margin-top: 19px;
}
.timeline::before {
  content: '';
  position: absolute;
  top: 34px;
  left: 12px;
  right: 14px;
  height: 1px;
  background: #fff;
}
.tick {
  position: relative;
  display: flex;
  flex-direction: column;
  align-items: center;
  font-size: 13px;
  font-weight: 500;
}
.time {
  padding-top: 2px;
  line-height: 24px;
}
.late .time {
  padding-left: 4px;
}
.stop {
  display: grid;
  place-items: center;
  height: 17px;
}
.stop i {
  width: 5px;
  height: 5px;
  border-radius: 50%;
  background: #fff;
}
.selected .time {
  position: relative;
  width: 43px;
  margin-bottom: 2px;
  padding: 0;
  background: #fff;
  color: #4d5a55;
  font-weight: 700;
}
.selected .time::after {
  content: '';
  position: absolute;
  top: 100%;
  left: 50%;
  margin-left: -5px;
  border: 5px solid transparent;
  border-top-color: #fff;
}
.selected .stop i {
  width: 9px;
  height: 9px;
  border: 1px solid #021421;
  outline: 1px solid #9fca21;
  background: #9fca21;
}
.upcoming {
  color: #9fca21;
}
.upcoming .stop i {
  width: 8px;
  height: 8px;
  background: #9fca21;
}

.footer {
  background: #1c3341;
  padding: 13px 0 28px;
}
.footer-logo {
  margin-left: 21px;
}
.columns {
  display: grid;
  grid-template-columns: 177fr 202fr 177fr 167fr;
  padding-left: 45px;
  margin-top: 21px;
}
.columns h4 {
  height: 30px;
  margin-bottom: 6px;
  color: #9fca21;
  font-size: 15px;
  font-weight: 700;
  line-height: 30px;
}
.columns section {
  display: flex;
  flex-direction: column;
  align-items: flex-start;
}
.columns a {
  font-size: 15px;
  font-weight: 300;
  line-height: 30px;
}
.columns .lit,
.columns .current {
  color: #9fca21;
}
.columns .current {
  text-decoration: underline;
  text-decoration-thickness: 1px;
  text-underline-offset: 5px;
}
.social {
  display: flex;
  align-items: center;
  padding: 20px 45px 0;
  margin-top: 14px;
  border-top: 1px solid #3c5160;
}
.group {
  display: flex;
  gap: 17px;
  margin-right: 20px;
}
.group:nth-child(2) {
  margin-right: 15px;
}
.group:nth-child(3) {
  margin-right: 27px;
}
.group.large {
  gap: 19px;
  margin-right: 0;
}
.group a {
  width: 32px;
  height: 32px;
  padding: 2px;
  border: 1px solid #9fca21;
  border-radius: 50%;
  background: #9fca21 content-box;
  fill: #fff;
}
.group svg {
  overflow: visible;
}
.group.large a {
  width: 37px;
  height: 37px;
  padding: 3px;
}
</style>
